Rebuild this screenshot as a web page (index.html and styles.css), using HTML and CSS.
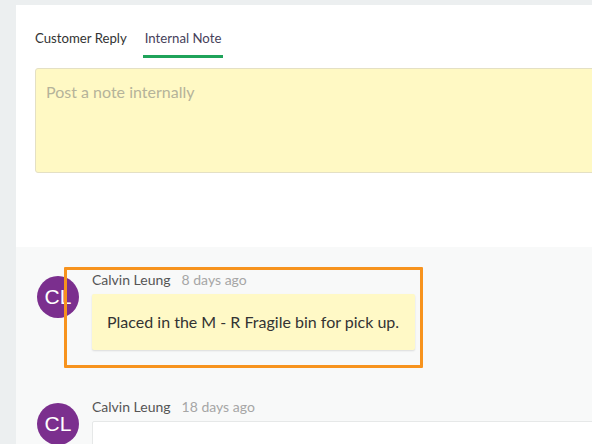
FILE: index.html
```html
<!DOCTYPE html>
<html>
<head>
<meta charset="utf-8">
<link rel="stylesheet" href="styles.css">
</head>
<body>
<div class="page">
  <div class="card">
    <div class="compose">
      <div class="tabs">
        <div class="tab">Customer Reply</div>
        <div class="tab active">Internal Note</div>
      </div>
      <div class="note-input">Post a note internally</div>
    </div>
    <div class="feed">
      <div class="comment">
        <div class="avatar">CL</div>
        <div class="body">
          <div class="meta"><span class="author">Calvin Leung</span><span class="time">8 days ago</span></div>
          <div class="bubble note">Placed in the M - R Fragile bin for pick up.</div>
          <div class="highlight"></div>
        </div>
      </div>
      <div class="comment">
        <div class="avatar">CL</div>
        <div class="body">
          <div class="meta"><span class="author">Calvin Leung</span><span class="time">18 days ago</span></div>
          <div class="bubble reply"></div>
        </div>
      </div>
    </div>
  </div>
</div>
</body>
</html>
```

FILE: styles.css
```css
html, body {
  margin: 0;
  padding: 0;
  height: 100%;
  overflow: hidden;
  background: #eceff0;
  font-family: "Lato", "Open Sans", sans-serif;
}

.page {
  padding: 5px 0 0 16px;
  height: 100%;
  box-sizing: border-box;
}

.card {
  background: #ffffff;
  width: 680px;
  height: 100%;
  display: flex;
  flex-direction: column;
}

.compose {
  flex-shrink: 0;
  padding: 0 0 0 19px;
  height: 242px;
  box-sizing: border-box;
}

.tabs {
  display: flex;
  gap: 14px;
  padding-top: 24px;
}

.tab {
  font-size: 13.2px;
  color: #333333;
  padding: 0 2px 8px;
  line-height: 18px;
  border-bottom: 3px solid transparent;
}

.tab:first-child {
  padding-left: 0;
}

.tab.active {
  color: #46415a;
  border-bottom-color: #1fa35a;
}

.note-input {
  margin-top: 10px;
  height: 105px;
  box-sizing: border-box;
  background: #fff9c4;
  border: 1px solid #e4e0c4;
  border-radius: 3px;
  padding: 13px 10px;
  font-size: 16px;
  color: #b5b39a;
  line-height: 20px;
}

.feed {
  flex: 1;
  background: #f8f9f9;
  padding: 24px 0 0 21px;
}

.comment {
  display: flex;
  gap: 13px;
  margin-bottom: 48px;
}

.avatar {
  width: 42px;
  height: 42px;
  margin-top: 5px;
  border-radius: 50%;
  background: #7b2f8e;
  color: #ffffff;
  font-family: "Liberation Sans", Arial, sans-serif;
  font-size: 21px;
  display: flex;
  align-items: center;
  justify-content: center;
  flex-shrink: 0;
}

.body {
  position: relative;
  flex: 1;
}

.meta {
  font-size: 14px;
  line-height: 18px;
}

.author {
  color: #555555;
  margin-right: 11px;
}

.time {
  color: #a6a6a6;
}

.bubble {
  margin-top: 5px;
  font-size: 16px;
  color: #333333;
  border-radius: 2px;
}

.bubble.note {
  display: inline-block;
  background: #fff9c6;
  padding: 18px 16px 18px 15px;
  line-height: 20px;
  box-shadow: 0 1px 2px rgba(0, 0, 0, 0.12);
}

.bubble.reply {
  background: #ffffff;
  border: 1px solid #e6e8e8;
  height: 60px;
}

.highlight {
  position: absolute;
  left: -28px;
  top: -4px;
  width: 359px;
  height: 101px;
  box-sizing: border-box;
  border: 3px solid #f7931e;
  border-radius: 1px;
  pointer-events: none;
}
```
